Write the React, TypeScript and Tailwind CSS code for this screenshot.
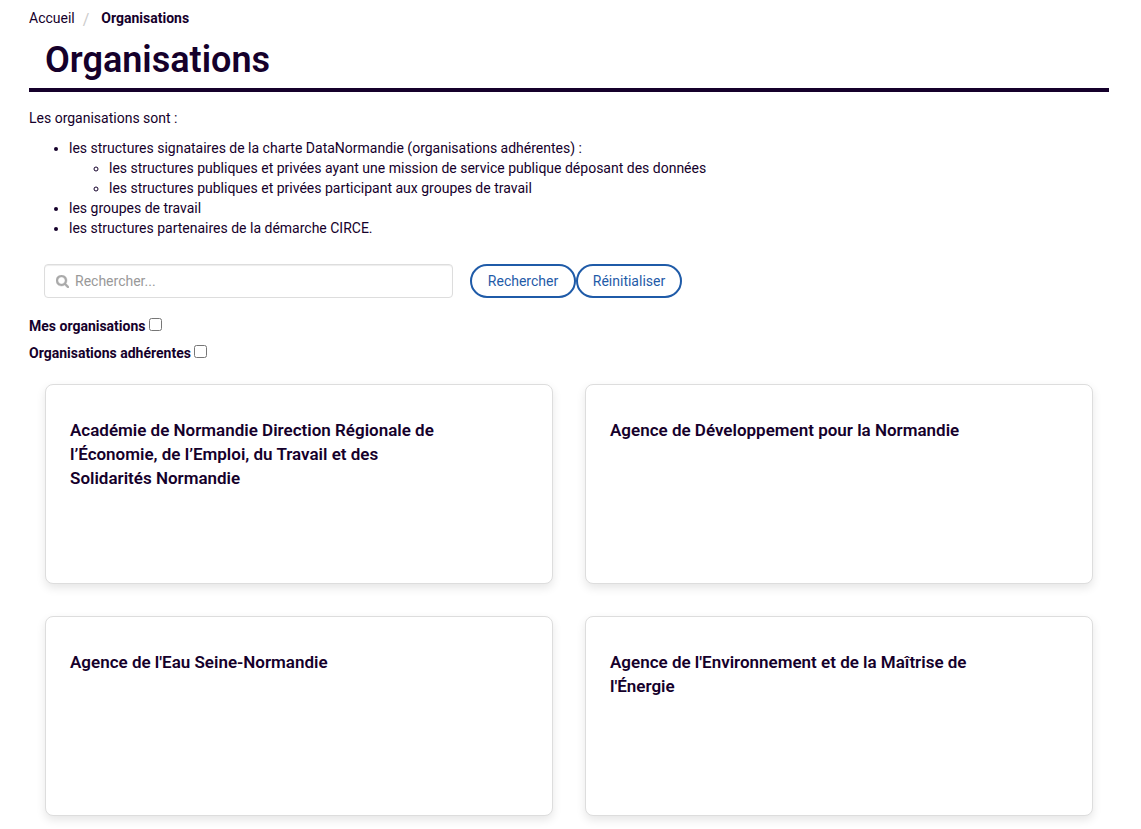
type CheckFieldProps = { id: string; label: string };

const organisations = [
  "Académie de Normandie Direction Régionale de l’Économie, de l’Emploi, du Travail et des Solidarités Normandie",
  "Agence de Développement pour la Normandie",
  "Agence de l'Eau Seine-Normandie",
  "Agence de l'Environnement et de la Maîtrise de l'Énergie",
];

function SearchIcon() {
  return (
    <svg viewBox="0 0 1664 1664" className="size-[13px] shrink-0 fill-[#aaaaaa] stroke-[#aaaaaa] stroke-[50]" aria-hidden="true">
      <path
        fillRule="evenodd"
        d="M1152 704q0 185-131.5 316.5t-316.5 131.5-316.5-131.5-131.5-316.5 131.5-316.5 316.5-131.5 316.5 131.5 131.5 316.5zm512 832q0 52-38 90t-90 38q-54 0-90-38l-343-342q-179 124-399 124-143 0-273.5-55.5t-225-150-150-225-55.5-273.5 55.5-273.5 150-225 225-150 273.5-55.5 273.5 55.5 225 150 150 225 55.5 273.5q0 220-124 399l343 343q37 37 37 90z"
      />
    </svg>
  );
}

function CheckField({ id, label }: CheckFieldProps) {
  return (
    <div className="flex items-start gap-[3px]">
      <label htmlFor={id} className="font-bold">
        {label}
      </label>
      <input id={id} type="checkbox" className="mt-0.5 size-[13px]" />
    </div>
  );
}

const pill =
  "h-[34px] w-[106px] rounded-full border-2 border-[#1f5ba8] bg-white text-center text-[#1f5ba8]";

export default function App() {
  return (
    <main className="bg-white pt-2 pr-8 pb-8 pl-[29px] font-['Roboto',sans-serif] text-sm leading-5 text-[#15002b]">
      <nav aria-label="Fil d'Ariane">
        <ol className="flex">
          <li>
            <a href="#accueil">Accueil</a>
          </li>
          <li aria-hidden="true" className="ml-2 text-base text-[#cccccc]">
            /
          </li>
          <li className="ml-3">
            <a href="#organisations" aria-current="page" className="font-bold">
              Organisations
            </a>
          </li>
        </ol>
      </nav>

      <h1 className="mt-2 border-b-4 border-[#15002b] px-4 pb-2 text-4xl leading-10 font-semibold">
        Organisations
      </h1>

      <p className="mt-4">Les organisations sont :</p>
      <ul className="mt-2.5 list-disc pl-10">
        <li>
          les structures signataires de la charte DataNormandie (organisations adhérentes) :
          <ul className="list-[circle] pl-10">
            <li>les structures publiques et privées ayant une mission de service publique déposant des données</li>
            <li>les structures publiques et privées participant aux groupes de travail</li>
          </ul>
        </li>
        <li>les groupes de travail</li>
        <li>les structures partenaires de la démarche CIRCE.</li>
      </ul>

      <form className="mt-[26px] flex gap-[17px] pl-[15px]" onSubmit={(e) => e.preventDefault()}>
        <label className="flex h-[34px] w-full max-w-[409px] items-center gap-1.5 rounded-sm border border-[#dddddd] px-[11px] shadow-[inset_0_1px_1px_rgba(0,0,0,0.075)]">
          <SearchIcon />
          <input
            type="text"
            aria-label="Rechercher une organisation"
            placeholder="Rechercher..."
            className="min-w-0 flex-1 bg-transparent outline-none placeholder:text-[#999999]"
          />
        </label>
        <div className="flex shrink-0">
          <button type="submit" className={pill}>
            Rechercher
          </button>
          <button type="reset" className={pill}>
            Réinitialiser
          </button>
        </div>
      </form>

      <div className="mt-[18px] flex flex-col gap-[7px]">
        <CheckField id="mes-organisations" label="Mes organisations" />
        <CheckField id="organisations-adherentes" label="Organisations adhérentes" />
      </div>

      <section className="mt-[21px] grid grid-cols-2 gap-8 px-4">
        {organisations.map((name) => (
          <article
            key={name}
            className="min-h-[200px] rounded-lg border border-[#dddddd] bg-white px-6 pt-[33px] pb-6 shadow-[0_4px_10px_rgba(0,0,0,0.1)]"
          >
            <h2 className="max-w-[368px] text-[17px] leading-6 font-semibold">{name}</h2>
          </article>
        ))}
      </section>
    </main>
  );
}
